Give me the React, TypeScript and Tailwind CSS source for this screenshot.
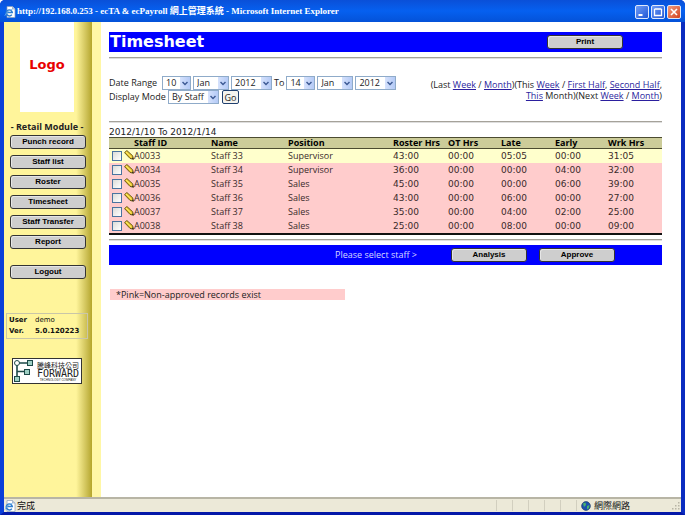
import type { ReactNode } from "react";

const BODY_FONT = "font-['Open_Sans','Noto_Sans_CJK_TC',sans-serif]";

const COLUMNS = ["Staff ID", "Name", "Position", "Roster Hrs", "OT Hrs", "Late", "Early", "Wrk Hrs"];

const STAFF = [
  { id: "A0033", name: "Staff 33", position: "Supervisor", hours: ["43:00", "00:00", "05:05", "00:00", "31:05"], approved: true },
  { id: "A0034", name: "Staff 34", position: "Supervisor", hours: ["36:00", "00:00", "00:00", "04:00", "32:00"], approved: false },
  { id: "A0035", name: "Staff 35", position: "Sales", hours: ["45:00", "00:00", "00:00", "06:00", "39:00"], approved: false },
  { id: "A0036", name: "Staff 36", position: "Sales", hours: ["43:00", "00:00", "06:00", "00:00", "27:00"], approved: false },
  { id: "A0037", name: "Staff 37", position: "Sales", hours: ["35:00", "00:00", "04:00", "02:00", "25:00"], approved: false },
  { id: "A0038", name: "Staff 38", position: "Sales", hours: ["25:00", "00:00", "08:00", "00:00", "09:00"], approved: false },
];

const MENU = ["Punch record", "Staff list", "Roster", "Timesheet", "Staff Transfer", "Report"];

function PageIcon() {
  return (
    <svg viewBox="0 0 12 12" className="size-3 shrink-0" aria-hidden="true">
      <path d="M3 .5h5.5L11 3v8.5H3z" fill="#fff" stroke="#8a9cb8" strokeWidth=".7" />
      <path d="M8.5.5V3H11" fill="#c8d4e6" stroke="#8a9cb8" strokeWidth=".6" />
      <path d="M7.8 8.6A3 3 0 1 1 8.3 6.6H3" fill="none" stroke="#2f7fd0" strokeWidth="1.5" />
      <path d="M.8 9.8C2 7 5 4 8.6 3.2" fill="none" stroke="#6db3ee" strokeWidth=".8" />
    </svg>
  );
}

function PencilIcon() {
  return (
    <svg viewBox="0 0 10 10" className="mb-[2px] size-[10px] shrink-0" aria-hidden="true">
      <path d="M.5 2.600 2.900.5 8.700 5.800 9.400 9.300 6 8.400z" fill="#e8c428" stroke="#4a3e08" strokeWidth=".8" strokeLinejoin="round" />
      <path d="M2 1.900 7.500 7.200" stroke="#fff48a" strokeWidth=".9" />
      <path d="M7.600 8.200 9.600 9.600 9.100 7.500z" fill="#222" />
    </svg>
  );
}

function CaptionButton({ label, close = false, children }: { label: string; close?: boolean; children: ReactNode }) {
  return (
    <button
      type="button"
      aria-label={label}
      className={`flex size-[14px] items-center justify-center rounded-[2px] border border-[#dfe8fb] ${
        close ? "bg-linear-to-br from-[#f09a7c] to-[#d2401a]" : "bg-linear-to-br from-[#6f9bf5] to-[#2156d6]"
      }`}
    >
      <svg viewBox="0 0 12 12" className="size-3" fill="none" stroke="#fff" aria-hidden="true">
        {children}
      </svg>
    </button>
  );
}

function GreyButton({ children }: { children: ReactNode }) {
  return (
    <button
      type="button"
      className="flex h-[14px] w-[76px] items-center justify-center rounded-[3px] border border-[#333] bg-[#cecece] font-['Liberation_Sans',sans-serif] text-[8px] leading-none font-bold text-black shadow-[inset_1px_1px_0_#e6e6e6]"
    >
      {children}
    </button>
  );
}

function Picker({ label, options, width }: { label: string; options: string[]; width: string }) {
  return (
    <span className={`relative h-[14px] ${width}`}>
      <select
        aria-label={label}
        className="block h-full w-full appearance-none border border-[#8fabc9] bg-white pl-[3px] text-[9px] leading-3 text-[#222]"
      >
        {options.map((option) => (
          <option key={option}>{option}</option>
        ))}
      </select>
      <span className="pointer-events-none absolute inset-y-[1px] right-[1px] flex w-[10px] items-center justify-center bg-linear-to-r from-[#d6e2fc] to-[#b4caf6]">
        <svg viewBox="0 0 6 5" className="h-[5px] w-[6px]" fill="none" stroke="#3d5a94" strokeWidth="1.4" aria-hidden="true">
          <path d="M.5 1 3 3.6 5.5 1" />
        </svg>
      </span>
    </span>
  );
}

function Link({ children }: { children: ReactNode }) {
  return (
    <a href="#" className="text-[#2b1f9e] underline">
      {children}
    </a>
  );
}

function Rule() {
  return <hr className="h-[2px] border-t border-b border-t-[#a5a29a] border-b-[#dedede]" />;
}

function ForwardLogo() {
  return (
    <div className="flex h-[26px] w-[70px] items-center border border-[#333] bg-white">
      <svg viewBox="0 0 22 24" className="h-6 w-[22px] shrink-0" fill="none" aria-hidden="true">
        <path d="M4 4h13M4 4v17M4 12.500h10" stroke="#1d4a48" strokeWidth="1.6" />
        <g fill="#9fd0c4" stroke="#1d4a48">
          <rect x="14.500" y="1.500" width="5" height="5" />
          <rect x="11.500" y="10.500" width="5" height="5" />
          <rect x="1.500" y="17.500" width="5" height="5" />
        </g>
        <circle cx="4" cy="4" r="2.500" fill="#fff" stroke="#1d4a48" />
      </svg>
      <div className="flex flex-1 flex-col items-center whitespace-nowrap text-[#222]">
        <span className="font-['Noto_Sans_CJK_TC',sans-serif] text-[7px] leading-[10px]">騰峰科技公司</span>
        <span className="font-['DejaVu_Sans_Mono',monospace] text-[10px] leading-[8px]">FORWARD</span>
        <span className="font-['Liberation_Sans',sans-serif] text-[3px] leading-[5px]">TECHNOLOGY COMPANY</span>
      </div>
    </div>
  );
}

function Sidebar() {
  return (
    <aside className="flex w-[97px] shrink-0 bg-[#fff7a6]">
      <div className="flex w-[88px] flex-col bg-linear-to-r from-[#fff59b] from-82% to-[#b5a62a]">
        <div className="ml-4 flex h-[90px] w-[54px] items-center justify-center bg-white pb-1 font-['DejaVu_Sans',sans-serif] text-[13px] font-bold text-[#e80000]">
          Logo
        </div>
        <h2 className="mt-[9px] w-[86px] text-center text-[9px] leading-[12px] font-bold whitespace-nowrap text-[#222]">
          - Retail Module -
        </h2>
        <nav className="mt-[2px] ml-[6px] flex flex-col gap-[6px]">
          {MENU.map((item) => (
            <GreyButton key={item}>{item}</GreyButton>
          ))}
          <div className="mt-[10px]">
            <GreyButton>Logout</GreyButton>
          </div>
        </nav>
        <dl className="mt-[34px] ml-[2px] grid w-[82px] grid-cols-[26px_1fr] border border-[#c9c6a8] px-[2px] py-[1px] font-['DejaVu_Sans',sans-serif] text-[7px] leading-[11px] text-[#111]">
          <dt className="font-bold">User</dt>
          <dd>demo</dd>
          <dt className="font-bold">Ver.</dt>
          <dd className="font-bold">5.0.120223</dd>
        </dl>
        <div className="mt-[19px] ml-2">
          <ForwardLogo />
        </div>
      </div>
    </aside>
  );
}

function StaffTable() {
  return (
    <table className="w-full table-fixed border-collapse border-b-2 border-[#111] text-left text-[9px] whitespace-nowrap text-[#3a2a2a]">
      <colgroup>
        <col className="w-[25px]" />
        <col className="w-[77px]" />
        <col className="w-[77px]" />
        <col className="w-[105px]" />
        <col className="w-[55px]" />
        <col className="w-[53px]" />
        <col className="w-[54px]" />
        <col className="w-[53px]" />
        <col className="w-[54px]" />
      </colgroup>
      <thead>
        <tr className="h-[11px] border-y border-[#4b4b30] bg-[#cccc99] leading-[10px] text-black">
          <td className="p-0" />
          {COLUMNS.map((column) => (
            <th key={column} scope="col" className="p-0 font-bold">
              {column}
            </th>
          ))}
        </tr>
      </thead>
      <tbody>
        {STAFF.map((row) => (
          <tr key={row.id} className={`h-[14px] leading-[14px] ${row.approved ? "bg-[#ffffcc]" : "bg-[#ffcccc]"}`}>
            <td className="p-0">
              <div className="flex items-center gap-[2px] pl-[3px]">
                <input
                  type="checkbox"
                  aria-label={`Select ${row.id}`}
                  className="size-[10px] shrink-0 appearance-none border border-[#4a74a0] bg-linear-to-br from-[#dcdcd8] to-white"
                />
                <PencilIcon />
              </div>
            </td>
            <td className="p-0">{row.id}</td>
            <td className="p-0">{row.name}</td>
            <td className="p-0">{row.position}</td>
            {row.hours.map((value, index) => (
              <td key={index} className="p-0 font-['DejaVu_Sans',sans-serif]">
                {value}
              </td>
            ))}
          </tr>
        ))}
      </tbody>
    </table>
  );
}

function Content() {
  return (
    <main className="min-w-0 flex-1 bg-white pt-[10px] pr-[19px] pl-2 text-[9px] text-[#222]">
      <header className="flex h-5 items-center justify-between bg-[#0000ff] pr-[39px] pl-[1px]">
        <h1 className="font-['DejaVu_Sans',sans-serif] text-[16px] leading-5 font-bold text-white">Timesheet</h1>
        <GreyButton>Print</GreyButton>
      </header>
      <div className="mt-[5px]">
        <Rule />
      </div>

      <div className="mt-[17px] flex h-[45px] items-start justify-between">
        <form className="flex flex-col" onSubmit={(event) => event.preventDefault()}>
          <div className="flex h-[14px] items-center gap-[2px]">
            <span className="w-[51px]">Date Range</span>
            <Picker label="From day" options={["10"]} width="w-[29px]" />
            <Picker label="From month" options={["Jan"]} width="w-[36px]" />
            <Picker label="From year" options={["2012"]} width="w-[41px]" />
            <span>To</span>
            <Picker label="To day" options={["14"]} width="w-[29px]" />
            <Picker label="To month" options={["Jan"]} width="w-[36px]" />
            <Picker label="To year" options={["2012"]} width="w-[41px]" />
          </div>
          <div className="flex h-[14px] items-center gap-[2px]">
            <span className="w-[57px]">Display Mode</span>
            <Picker label="Display mode" options={["By Staff"]} width="w-[51px]" />
            <button
              type="submit"
              className="ml-[1px] flex h-[14px] w-[17px] items-center justify-center rounded-[2px] border border-[#1f3f6e] bg-[#f4f3ee] leading-none"
            >
              Go
            </button>
          </div>
        </form>
        <p className="pt-[3px] text-right leading-[11px] whitespace-nowrap">
          (Last <Link>Week</Link> / <Link>Month</Link>)(This <Link>Week</Link> / <Link>First Half</Link>,{" "}
          <Link>Second Half</Link>,
          <br />
          <Link>This</Link> Month)(Next <Link>Week</Link> / <Link>Month</Link>)
        </p>
      </div>

      <Rule />
      <p className="mt-1 h-[10px] font-['DejaVu_Sans',sans-serif] leading-[10px]">2012/1/10 To 2012/1/14</p>
      <StaffTable />
      <div className="mt-1">
        <Rule />
      </div>

      <div className="mt-1 flex h-5 items-center justify-end gap-3 bg-[#0000ff] pr-[47px]">
        <span className="mr-[22px] text-[#d8d8ff]">Please select staff &gt;</span>
        <GreyButton>Analysis</GreyButton>
        <GreyButton>Approve</GreyButton>
      </div>

      <p className="mt-6 ml-[1px] h-[11px] w-[235px] bg-[#ffcccc] pl-[6px] leading-[11px]">
        *Pink=Non-approved records exist
      </p>
    </main>
  );
}

function StatusBar() {
  return (
    <footer className="flex h-[15px] shrink-0 items-center border-t-2 border-[#b8b5a5] bg-[#ece9d8] text-[9px] text-[#111]">
      <PageIcon />
      <span className="ml-[1px] leading-none">完成</span>
      <div className="ml-auto flex h-[11px]">
        <i className="w-4 border-l border-[#d2cfbf]" />
        <i className="w-4 border-l border-[#d2cfbf]" />
        <i className="w-4 border-l border-[#d2cfbf]" />
        <i className="w-4 border-l border-[#d2cfbf]" />
        <i className="w-4 border-l border-[#d2cfbf]" />
      </div>
      <div className="flex h-[11px] w-[105px] items-center border-l border-[#d2cfbf] pl-1">
        <svg viewBox="0 0 10 10" className="size-[10px]" aria-hidden="true">
          <circle cx="5" cy="5" r="4.400" fill="#1b4fae" stroke="#12305e" strokeWidth=".6" />
          <path d="M2 2.500 4.500 1.500 5 4 3 6z M6 5 8.500 4 8 7 6 8.500z" fill="#49b26b" />
        </svg>
        <span className="ml-[3px] leading-none">網際網路</span>
        <svg viewBox="0 0 10 10" className="ml-auto size-[10px]" fill="#b8b5a5" aria-hidden="true">
          <path d="M7 1h1.500v1.500H7zM4 4h1.500v1.500H4zM7 4h1.500v1.500H7zM1 7h1.500v1.500H1zM4 7h1.500v1.500H4zM7 7h1.500v1.500H7z" />
        </svg>
      </div>
    </footer>
  );
}

export default function App() {
  return (
    <div className={`flex h-screen flex-col overflow-hidden rounded-t-[5px] bg-[#0831d9] ${BODY_FONT}`}>
      <div className="flex h-[22px] shrink-0 items-center bg-linear-to-b from-[#0a50d8] via-[#0560f0] to-[#0452d8] pt-[1px] pr-1 pl-[4px]">
        <PageIcon />
        <span className="ml-[1px] font-['Liberation_Serif','Noto_Sans_CJK_TC',serif] text-[9px] leading-none font-bold whitespace-nowrap text-white">
          http://192.168.0.253 - ecTA &amp; ecPayroll 網上管理系統 - Microsoft Internet Explorer
        </span>
        <div className="ml-auto flex gap-[2px]">
          <CaptionButton label="Minimize">
            <path d="M2.500 9h4" strokeWidth="2" />
          </CaptionButton>
          <CaptionButton label="Maximize">
            <path d="M2.500 3h7M2.500 3v6.500h7V3" strokeWidth="1.3" />
          </CaptionButton>
          <CaptionButton label="Close" close>
            <path d="m3 3 6 6M9 3 3 9" strokeWidth="1.6" />
          </CaptionButton>
        </div>
      </div>
      <div className="flex min-h-0 flex-1 flex-col border-x-4 border-b-[3px] border-t-0 border-l-[#0a3fd8] border-r-[#0a2cc0] border-b-[#0418a8]">
        <div className="flex min-h-0 flex-1">
          <Sidebar />
          <Content />
        </div>
        <StatusBar />
      </div>
    </div>
  );
}
